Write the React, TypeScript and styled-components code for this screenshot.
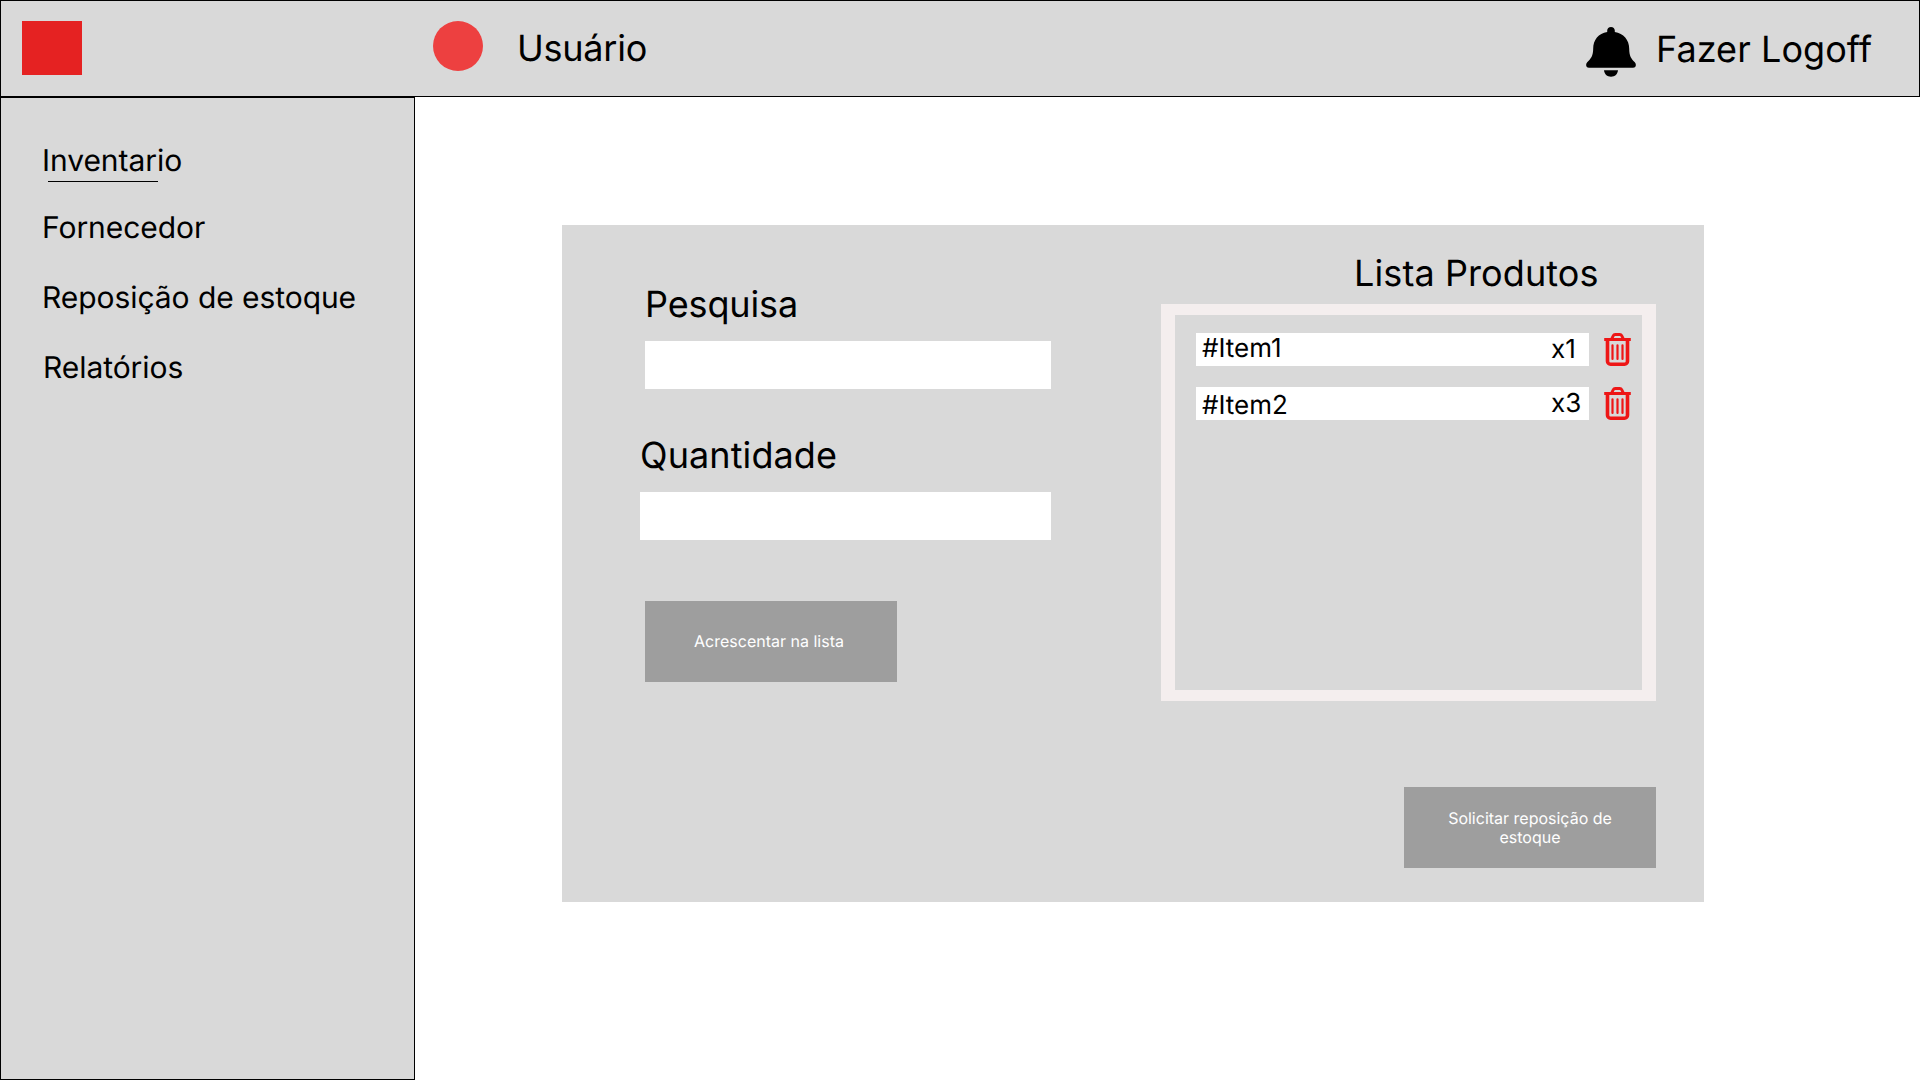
import React from "react";
import styled, { createGlobalStyle } from "styled-components";

const GlobalStyle = createGlobalStyle`
  * { box-sizing: border-box; }
  body {
    margin: 0;
    background: #fff;
    color: #000;
    font-family: Inter, "Liberation Sans", sans-serif;
    text-rendering: geometricPrecision;
  }
`;

const Page = styled.div`
  display: grid;
  grid-template: 97px 983px / 415px 1505px;
  width: 1920px;
  height: 1080px;
  overflow: hidden;
`;

const Header = styled.header`
  grid-column: 1 / -1;
  display: flex;
  align-items: flex-start;
  padding: 20px 0 0 21px;
  border: 1px solid #000;
  background: #d9d9d9;
`;

const Logo = styled.div`
  width: 60px;
  height: 54px;
  background: #e52222;
`;

const Avatar = styled.div`
  width: 50px;
  height: 50px;
  margin-left: 351px;
  border-radius: 50%;
  background: #ed4040;
`;

const HeaderText = styled.span<{ $left: number; $top: number; $tracking: number }>`
  margin: ${(p) => p.$top}px 0 0 ${(p) => p.$left}px;
  font-size: 36px;
  line-height: 44px;
  letter-spacing: ${(p) => p.$tracking}px;
  white-space: nowrap;
`;

const Account = styled.div`
  display: flex;
  align-items: flex-start;
  width: 333px;
  margin-left: auto;
`;

const BellSvg = styled.svg`
  display: block;
  width: 50px;
  height: 50px;
  margin-top: 6px;
`;

const Sidebar = styled.nav`
  display: flex;
  flex-direction: column;
  align-items: flex-start;
  padding: 45px 0 0 41px;
  border: 1px solid #000;
  background: #d9d9d9;
`;

const NavItem = styled.a<{ $space?: number; $indent?: number }>`
  margin: 0 0 ${(p) => p.$space ?? 0}px ${(p) => p.$indent ?? 0}px;
  font-size: 30px;
  line-height: 36px;
  letter-spacing: -0.06px;
  white-space: nowrap;
`;

const Underline = styled.div`
  width: 110px;
  height: 1px;
  margin: 2px 0 28px 6px;
  background: #000;
`;

const Main = styled.main`
  padding: 128px 0 0 147px;
`;

const Panel = styled.section`
  display: flex;
  justify-content: space-between;
  width: 1142px;
  height: 677px;
  padding: 0 48px 0 78px;
  background: #d9d9d9;
`;

const Form = styled.div`
  display: flex;
  flex-direction: column;
  align-items: flex-end;
  width: 411px;
  padding-top: 57px;
`;

const Field = styled.label<{ $width: number; $space: number; $tracking: number }>`
  display: block;
  width: ${(p) => p.$width}px;
  margin-bottom: ${(p) => p.$space}px;
  font-size: 36px;
  line-height: 44px;
  letter-spacing: ${(p) => p.$tracking}px;
`;

const Input = styled.input`
  display: block;
  width: 100%;
  height: 48px;
  margin-top: 15px;
  padding: 0 8px;
  border: 0;
  outline: 0;
  background: #fff;
  font: inherit;
`;

const Button = styled.button`
  flex: none;
  width: 252px;
  height: 81px;
  padding: 0 40px;
  border: 0;
  background: #9e9e9e;
  color: #fff;
  font: 16px/19px Inter, "Liberation Sans", sans-serif;
  text-align: center;
  text-rendering: geometricPrecision;
`;

const AddButton = styled(Button)`
  align-self: flex-start;
  margin-left: 5px;
  padding: 0 44px 0 40px;
`;

const Products = styled.div`
  display: flex;
  flex-direction: column;
  align-items: flex-end;
  width: 495px;
  padding-top: 26px;
`;

const ListTitle = styled.h2`
  width: 302px;
  margin: 0 0 9px;
  font-size: 36px;
  font-weight: 400;
  line-height: 44px;
  letter-spacing: 0.1px;
  white-space: nowrap;
`;

const List = styled.ul`
  display: flex;
  flex-direction: column;
  gap: 21px;
  width: 495px;
  height: 397px;
  margin: 0 0 86px;
  padding: 18px 0 0 21px;
  border: solid #f4eeee;
  border-width: 11px 14px;
  list-style: none;
`;

const Row = styled.li`
  display: flex;
  gap: 15px;
`;

const Item = styled.div`
  display: flex;
  justify-content: space-between;
  width: 393px;
  height: 33px;
  padding-left: 6px;
  background: #fff;
  font-size: 26px;
  line-height: 30px;
`;

const Cell = styled.span<{ $drop: number; $width?: number }>`
  width: ${(p) => (p.$width ? `${p.$width}px` : "auto")};
  padding-top: ${(p) => p.$drop}px;
`;

const TrashSvg = styled.svg`
  display: block;
  width: 27px;
  height: 33px;
`;

const Bell = () => (
  <BellSvg viewBox="0 0 50 50">
    <path d="M25 0C27.300 0 28.800 1.600 28.800 3.600V4.900C37.500 6.400 43.200 12.800 43.200 21.500C43.200 29 45.200 31.800 48.800 35.300C50.600 37.200 50.200 40.700 47 40.700H3C-0.200 40.700-0.600 37.200 1.200 35.300C4.800 31.800 7.200 29 7.200 21.500C7.200 12.800 12.500 6.400 21.200 4.900V3.600C21.200 1.600 22.700 0 25 0Z" />
    <path d="M18 43.300H32C31.700 47 28.900 49.800 25 49.800S18.300 47 18 43.300Z" />
  </BellSvg>
);

const Trash = () => (
  <TrashSvg viewBox="0 0 27 33" fill="none" stroke="#ee1616" strokeLinecap="round" strokeLinejoin="round">
    <path strokeWidth="3" strokeLinecap="butt" d="M0.200 6.500h26.600" />
    <path strokeWidth="3.600" d="M3.500 7v21.200a3 3 0 0 0 3 3h14a3 3 0 0 0 3-3V7" />
    <path strokeWidth="2.900" d="M7.800 5.600L9.300 2.700Q9.900 1.500 11.200 1.500H15.800Q17.100 1.500 17.700 2.700L19.200 5.600" />
    <path strokeWidth="2.200" d="M8.500 12.300v13.600M13.500 12.300v13.600M18.500 12.300v13.600" />
  </TrashSvg>
);

const products = [
  { name: "#Item1", amount: "x1", nameDrop: 1, amountDrop: 2 },
  { name: "#Item2", amount: "x3", nameDrop: 4, amountDrop: 2 },
];

export default function App() {
  return (
    <Page>
      <GlobalStyle />
      <Header>
        <Logo />
        <Avatar />
        <HeaderText $left={34} $top={5} $tracking={-0.25}>Usuário</HeaderText>
        <Account>
          <Bell />
          <HeaderText $left={20} $top={6} $tracking={0.06}>Fazer Logoff</HeaderText>
        </Account>
      </Header>
      <Sidebar>
        <NavItem>Inventario</NavItem>
        <Underline />
        <NavItem $space={34}>Fornecedor</NavItem>
        <NavItem $space={34}>Reposição de estoque</NavItem>
        <NavItem $indent={1}>Relatórios</NavItem>
      </Sidebar>
      <Main>
        <Panel>
          <Form>
            <Field $width={406} $space={44} $tracking={-0.12}>
              Pesquisa
              <Input />
            </Field>
            <Field $width={411} $space={61} $tracking={0.1}>
              Quantidade
              <Input />
            </Field>
            <AddButton>Acrescentar na lista</AddButton>
          </Form>
          <Products>
            <ListTitle>Lista Produtos</ListTitle>
            <List>
              {products.map((p) => (
                <Row key={p.name}>
                  <Item>
                    <Cell $drop={p.nameDrop}>{p.name}</Cell>
                    <Cell $drop={p.amountDrop} $width={38}>{p.amount}</Cell>
                  </Item>
                  <Trash />
                </Row>
              ))}
            </List>
            <Button>Solicitar reposição de estoque</Button>
          </Products>
        </Panel>
      </Main>
    </Page>
  );
}
